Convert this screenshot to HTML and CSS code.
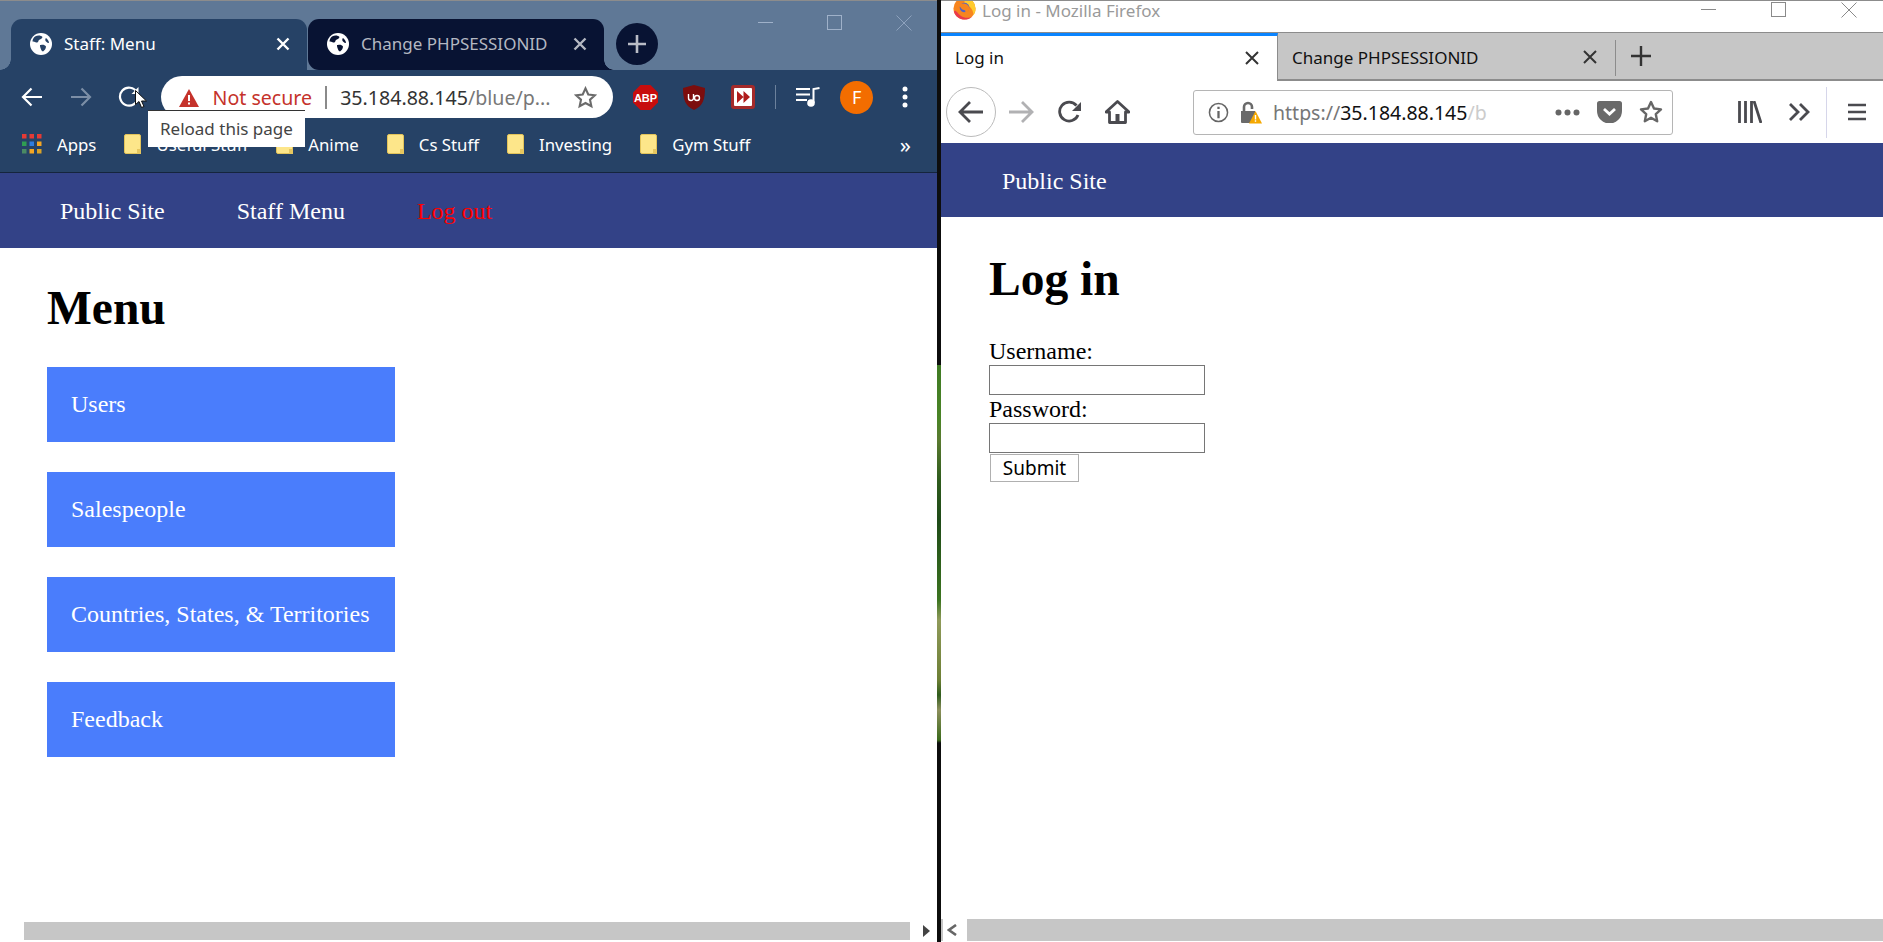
FILE: index.html
```html
<!DOCTYPE html>
<html lang="en">
<head>
  <meta charset="UTF-8">
  <title>Change PHPSESSIONID</title>
  <link rel="stylesheet" href="styles.css">
</head>
<body>
<div class="screen">

  <!-- Chrome window -->
  <section class="chrome">
    <div class="tabstrip">
      <div class="tab tab-on">
        <svg class="globe" viewBox="0 0 22 22"><circle cx="11" cy="11" r="11" fill="#fff"/><path d="M5 3.500c3-1.500 6-1 7.500.5-.5 2-2.500 2-3.500 3s-.5 2.500-2 2.500S4 8 2.500 8.500C2.500 6.500 3.500 4.500 5 3.500zM11 12c2-.5 4 0 5 1.500 0 2-1.500 4-3 5-1.500-.5-2-2-2.500-3.500s-.5-2-.5-3zM16 5c1.500 1 3 3 3 5-1 0-2-.5-3-1.500S15 6 16 5z" fill="#264266"/></svg>
        <span class="tab-title">Staff: Menu</span>
        <svg class="tab-x" viewBox="0 0 14 14"><path d="M1.500 1.500l11 11M12.500 1.500l-11 11" stroke="#fff" stroke-width="2.400"/></svg>
      </div>
      <div class="tab tab-off">
        <svg class="globe" viewBox="0 0 22 22"><circle cx="11" cy="11" r="11" fill="#fff"/><path d="M5 3.500c3-1.500 6-1 7.500.5-.5 2-2.500 2-3.500 3s-.5 2.500-2 2.500S4 8 2.500 8.500C2.500 6.500 3.500 4.500 5 3.500zM11 12c2-.5 4 0 5 1.500 0 2-1.500 4-3 5-1.500-.5-2-2-2.500-3.500s-.5-2-.5-3zM16 5c1.500 1 3 3 3 5-1 0-2-.5-3-1.500S15 6 16 5z" fill="#081333"/></svg>
        <span class="tab-title">Change PHPSESSIONID</span>
        <svg class="tab-x" viewBox="0 0 14 14"><path d="M1.500 1.500l11 11M12.500 1.500l-11 11" stroke="#b4b8c2" stroke-width="2.400"/></svg>
      </div>
      <div class="newtab">
        <svg viewBox="0 0 18 18" width="18" height="18"><path d="M9 0v18M0 9h18" stroke="#b9bcc6" stroke-width="2.600"/></svg>
      </div>
      <div class="winbtns">
        <svg viewBox="0 0 16 16" width="16" height="16"><path d="M0 7.500h15" stroke="#9fb1c9" stroke-width="1"/></svg>
        <svg viewBox="0 0 16 16" width="16" height="16"><rect x=".5" y=".5" width="14" height="14" fill="none" stroke="#9fb1c9"/></svg>
        <svg viewBox="0 0 16 16" width="16" height="16"><path d="M.5.500l15 15M15.500.500l-15 15" stroke="#8ea2bd" stroke-width="1"/></svg>
      </div>
    </div>

    <div class="toolbar">
      <div class="navrow">
        <span class="slot"><svg viewBox="0 0 22 20" width="22" height="20"><path d="M21 10H2M10.500 1.500L2 10l8.500 8.500" fill="none" stroke="#fff" stroke-width="2.200"/></svg></span>
        <span class="slot"><svg viewBox="0 0 22 20" width="22" height="20"><path d="M1 10h19M11.500 1.500L20 10l-8.500 8.500" fill="none" stroke="#7c8ea6" stroke-width="2.200"/></svg></span>
        <span class="slot"><svg viewBox="0 0 22 22" width="22" height="22"><path d="M19 6.500A9 9 0 1 0 20 11" fill="none" stroke="#fff" stroke-width="2.200"/><path d="M20.500 1v7h-7z" fill="#fff"/></svg></span>
        <div class="omnibox">
          <svg viewBox="0 0 20 18" width="20" height="18"><path d="M10 0l10 18H0z" fill="#c5322b"/><path d="M9 6h2v6H9zM9 13.500h2V15.500H9z" fill="#fff"/></svg>
          <span class="warn">Not secure</span>
          <span class="omni-sep"></span>
          <span class="url">35.184.88.145<span class="url-rest">/blue/p...</span></span>
          <svg class="omni-star" viewBox="0 0 24 24" width="23" height="23"><path d="M12 2.500l2.900 6.300 6.900.8-5.100 4.700 1.400 6.800-6.100-3.400-6.100 3.400 1.400-6.800-5.100-4.700 6.900-.8z" fill="none" stroke="#6b6b6b" stroke-width="2.200"/></svg>
        </div>
        <span class="slot ext-first">
          <svg viewBox="0 0 25 25" width="25" height="25"><path d="M7.500 0h10L25 7.500v10L17.500 25h-10L0 17.500v-10z" fill="#c70d0d"/><text x="12.500" y="17" class="abp">ABP</text></svg>
        </span>
        <span class="slot">
          <svg viewBox="0 0 22 25" width="22" height="25"><path d="M11 0l11 3c0 11-2 18-11 22C2 21 0 14 0 3z" fill="#7c0d0d"/><path d="M5.500 9v4a2.500 2.500 0 0 0 5 0V9M16.500 13a2.500 2.500 0 1 1-5 0 2.500 2.500 0 0 1 5 0z" fill="none" stroke="#fff" stroke-width="1.400"/></svg>
        </span>
        <span class="slot">
          <svg viewBox="0 0 24 24" width="24" height="24"><rect width="24" height="24" rx="3" fill="#a52a2a"/><rect x="3" y="3" width="18" height="18" rx="1" fill="#fff"/><path d="M6 6l6.500 6L6 18zM12.500 6l6.500 6-6.500 6z" fill="#b01c1c"/></svg>
        </span>
        <span class="tool-sep"></span>
        <span class="slot">
          <svg viewBox="0 0 24 20" width="24" height="20"><path d="M0 2h14M0 7.500h14M0 13h11" stroke="#fff" stroke-width="2"/><path d="M17.500 16V2l6-1" fill="none" stroke="#fff" stroke-width="2"/><circle cx="15" cy="16" r="3.800" fill="#fff"/></svg>
        </span>
        <span class="slot"><span class="avatar">F</span></span>
        <span class="slot">
          <svg viewBox="0 0 6 22" width="6" height="22"><circle cx="3" cy="3" r="2.500" fill="#fff"/><circle cx="3" cy="11" r="2.500" fill="#fff"/><circle cx="3" cy="19" r="2.500" fill="#fff"/></svg>
        </span>
      </div>

      <div class="bookmarks">
        <span class="bm">
          <svg viewBox="0 0 20 20" width="20" height="20"><g>
            <rect width="4.500" height="4.500" fill="#e53a35"/><rect x="7.500" width="4.500" height="4.500" fill="#e53a35"/><rect x="15" width="4.500" height="4.500" fill="#e53a35"/>
            <rect y="7.500" width="4.500" height="4.500" fill="#2f9e52"/><rect x="7.500" y="7.500" width="4.500" height="4.500" fill="#2f7de0"/><rect x="15" y="7.500" width="4.500" height="4.500" fill="#f5a623"/>
            <rect y="15" width="4.500" height="4.500" fill="#4a8a64"/><rect x="7.500" y="15" width="4.500" height="4.500" fill="#f5a623"/><rect x="15" y="15" width="4.500" height="4.500" fill="#d9a227"/>
          </g></svg>
          Apps
        </span>
        <span class="bm"><span class="folder"></span>Useful Stuff</span>
        <span class="bm"><span class="folder"></span>Anime</span>
        <span class="bm"><span class="folder"></span>Cs Stuff</span>
        <span class="bm"><span class="folder"></span>Investing</span>
        <span class="bm"><span class="folder"></span>Gym Stuff</span>
        <span class="bm-more">»</span>
      </div>
    </div>

    <nav class="sitenav">
      <a class="sitelink">Public Site</a>
      <a class="sitelink">Staff Menu</a>
      <a class="sitelink logout">Log out</a>
    </nav>

    <main class="page">
      <h1>Menu</h1>
      <a class="menu-btn">Users</a>
      <a class="menu-btn">Salespeople</a>
      <a class="menu-btn">Countries, States, &amp; Territories</a>
      <a class="menu-btn">Feedback</a>
    </main>

    <div class="hscroll">
      <span class="hscroll-bar"></span>
      <span class="hscroll-end"><svg viewBox="0 0 7 12" width="7" height="12"><path d="M0 0l7 6-7 6z" fill="#444"/></svg></span>
    </div>

    <div class="tooltip">Reload this page</div>
    <svg class="cursor" viewBox="0 0 12 18" width="12" height="18"><path d="M.5.500v14l3.500-3 2.500 6 2.500-1-2.500-5.500h5z" fill="#fff" stroke="#111" stroke-width="1"/></svg>
  </section>

  <div class="gap-strip"></div>

  <!-- Firefox window -->
  <section class="firefox">
    <div class="ff-title">
      <svg class="ff-logo" viewBox="0 0 24 24" width="23" height="23"><circle cx="12" cy="12" r="11.500" fill="#f7851f"/><path d="M12 .5a11.500 11.500 0 0 1 11.500 11.500c0 3-1 5-2 7-.5-7-5-11-9.500-11.500z" fill="#ffcb2e"/><path d="M1 15c1 5 6 8.500 11 8.500 3 0 6-1 8-3-3 1.500-8 2-12-1S3 13 1 15z" fill="#ea3a4c"/><circle cx="12" cy="11" r="5" fill="#4f63c9"/><path d="M6.500 8c3-2 9-2 10.500 3 .5 3-2 6-6 6 2-1 3-3 .5-3.500S7.500 11 6.500 8z" fill="#f7851f"/></svg>
      <span class="ff-title-text">Log in - Mozilla Firefox</span>
      <div class="ff-winbtns">
        <svg viewBox="0 0 16 16" width="16" height="16"><path d="M0 7.500h15" stroke="#8a8a8a"/></svg>
        <svg viewBox="0 0 16 16" width="16" height="16"><rect x=".5" y=".5" width="14" height="14" fill="none" stroke="#8a8a8a"/></svg>
        <svg viewBox="0 0 16 16" width="16" height="16"><path d="M.5.500l15 15M15.500.500l-15 15" stroke="#8a8a8a"/></svg>
      </div>
    </div>

    <div class="ff-tabs">
      <div class="ff-tab ff-tab-on">
        <span>Log in</span>
        <svg viewBox="0 0 14 14" width="14" height="14"><path d="M1 1l12 12M13 1L1 13" stroke="#333" stroke-width="2"/></svg>
      </div>
      <div class="ff-tab ff-tab-off">
        <span>Change PHPSESSIONID</span>
        <svg viewBox="0 0 14 14" width="14" height="14"><path d="M1 1l12 12M13 1L1 13" stroke="#333" stroke-width="2"/></svg>
      </div>
      <span class="ff-tab-sep"></span>
      <svg class="ff-plus" viewBox="0 0 20 20" width="20" height="20"><path d="M10 0v20M0 10h20" stroke="#333" stroke-width="2.400"/></svg>
    </div>

    <div class="ff-toolbar">
      <span class="ff-back"><svg viewBox="0 0 26 24" width="26" height="24"><path d="M25 12H3M12 2L2 12l10 10" fill="none" stroke="#4a4a4f" stroke-width="2.800"/></svg></span>
      <svg class="ff-fwd" viewBox="0 0 25 24" width="25" height="24"><path d="M0 12h22M13 2l10 10-10 10" fill="none" stroke="#b1b1b3" stroke-width="2.800"/></svg>
      <svg class="ff-reload" viewBox="0 0 24 24" width="24" height="24"><path d="M20 15a9.500 9.500 0 1 1-1.500-9.500" fill="none" stroke="#4a4a4f" stroke-width="2.800"/><path d="M23 2v9h-9z" fill="#4a4a4f"/></svg>
      <svg class="ff-home" viewBox="0 0 25 24" width="25" height="24"><path d="M12.500 1.500L1 12h3.500v10.500h16V12H24z" fill="none" stroke="#4a4a4f" stroke-width="2.800" stroke-linejoin="round"/><rect x="10.500" y="14" width="4" height="8" fill="#4a4a4f"/></svg>
      <div class="ff-urlbar">
        <svg viewBox="0 0 22 22" width="21" height="21"><circle cx="11" cy="11" r="9.500" fill="none" stroke="#666" stroke-width="1.600"/><path d="M9.800 9.500h2.400V17H9.800zM9.800 5h2.400v2.400H9.800z" fill="#666"/></svg>
        <svg class="ff-lock" viewBox="0 0 23 23" width="23" height="23"><path d="M2 10h14v11a1 1 0 0 1-1 1H3a1 1 0 0 1-1-1z" fill="#6a6a6a"/><path d="M5 10V6a4 4 0 0 1 8 0v2" fill="none" stroke="#6a6a6a" stroke-width="2.600"/><path d="M16.500 10L23 22.500H10z" fill="#f5a800"/><path d="M15.800 14h1.400v4.500h-1.400zM15.800 19.300h1.400v1.500h-1.400z" fill="#fff"/></svg>
        <span class="ff-url"><span class="ff-url-dim">https://</span>35.184.88.145<span class="ff-url-fade">/b</span></span>
        <svg class="ff-dots" viewBox="0 0 25 7" width="25" height="7"><circle cx="3.500" cy="3.500" r="3" fill="#666"/><circle cx="12.500" cy="3.500" r="3" fill="#666"/><circle cx="21.500" cy="3.500" r="3" fill="#666"/></svg>
        <svg class="ff-pocket" viewBox="0 0 25 22" width="25" height="22"><path d="M2.500 0h20A2.500 2.500 0 0 1 25 2.500V10A12.500 12.500 0 0 1 0 10V2.500A2.500 2.500 0 0 1 2.500 0z" fill="#6a6a6a"/><path d="M7 8l5.500 5L18 8" fill="none" stroke="#fff" stroke-width="2.800"/></svg>
        <svg class="ff-star" viewBox="0 0 24 24" width="24" height="24"><path d="M12 2l3 6.500 7 .9-5.200 4.800 1.400 7L12 17.700l-6.200 3.500 1.400-7L2 9.400l7-.9z" fill="none" stroke="#666" stroke-width="2.400" stroke-linejoin="round"/></svg>
      </div>
      <svg class="ff-lib" viewBox="0 0 24 22" width="24" height="22"><path d="M1.500 0v22M7.500 0v22M13.500 0v22M16 0l7 22" stroke="#4a4a4f" stroke-width="2.800"/></svg>
      <svg class="ff-more" viewBox="0 0 21 18" width="21" height="18"><path d="M1 1l8 8-8 8M11 1l8 8-8 8" fill="none" stroke="#4a4a4f" stroke-width="2.800"/></svg>
      <span class="ff-bar-sep"></span>
      <svg class="ff-menu" viewBox="0 0 18 18" width="18" height="18"><path d="M0 2h18M0 9h18M0 16h18" stroke="#4a4a4f" stroke-width="2.600"/></svg>
    </div>

    <nav class="sitenav ff-nav">
      <a class="sitelink">Public Site</a>
    </nav>

    <main class="page ff-page">
      <h1>Log in</h1>
      <form class="login" onsubmit="return false;">
        <label class="login-label" for="user">Username:</label>
        <input class="login-input" type="text" id="user">
        <label class="login-label" for="pass">Password:</label>
        <input class="login-input" type="password" id="pass">
        <button class="login-btn">Submit</button>
      </form>
    </main>

    <div class="ff-scroll">
      <span class="ff-scroll-end"><svg viewBox="0 0 10 12" width="10" height="12"><path d="M9 1L2 6l7 5" fill="none" stroke="#666" stroke-width="2.600"/></svg></span>
      <span class="ff-scroll-bar"></span>
    </div>
  </section>
</div>
</body>
</html>
```

FILE: styles.css
```css
html, body {
  margin: 0;
  padding: 0;
  background: #fff;
}

.screen {
  display: flex;
  width: 1883px;
  height: 942px;
  overflow: hidden;
  font-family: "Noto Sans", sans-serif;
}

/* ---- chrome window ---- */
.chrome {
  position: relative;
  display: flex;
  flex-direction: column;
  width: 937px;
  flex: none;
}

.tabstrip {
  display: flex;
  height: 51px;
  padding: 18px 0 0 11px;
  background: #5f7896;
  border-top: 1px solid #8c8c8c;
}

.tab {
  position: relative;
  display: flex;
  align-items: center;
  width: 296px;
  height: 51px;
  padding: 0 17px 2px 19px;
  box-sizing: border-box;
  border-radius: 11px 11px 0 0;
  font-size: 17px;
}

.tab-on {
  background: #264266;
  color: #fff;
}

.tab-on::before {
  content: "";
  position: absolute;
  left: -11px;
  bottom: 0;
  width: 11px;
  height: 11px;
  background: radial-gradient(circle at 0 0, #5f7896 10.5px, #264266 11px);
}

.tab-off {
  margin-left: 1px;
  background: #081333;
  color: #b4b8c2;
  border-radius: 11px 11px 0 11px;
}

.tab-off::after {
  content: "";
  position: absolute;
  right: -10px;
  bottom: 0;
  width: 10px;
  height: 10px;
  background: radial-gradient(circle at 100% 0, #5f7896 9.5px, #081333 10px);
}

.globe {
  width: 22px;
  height: 22px;
  flex: none;
}

.tab-title {
  margin-left: 12px;
  white-space: nowrap;
}

.tab-x {
  width: 14px;
  height: 14px;
  margin-left: auto;
}

.newtab {
  display: flex;
  align-items: center;
  justify-content: center;
  width: 42px;
  height: 42px;
  margin: 4px 0 0 12px;
  border-radius: 50%;
  background: #081333;
}

.winbtns {
  display: flex;
  gap: 53px;
  margin: -4px 0 0 100px;
}

.toolbar {
  height: 102px;
  background: #264266;
  border-bottom: 1px solid #15253d;
}

.navrow {
  display: flex;
  align-items: center;
  height: 42px;
  padding: 6px 0 0 8px;
}

.slot {
  display: flex;
  align-items: center;
  justify-content: center;
  width: 48.500px;
  height: 42px;
  flex: none;
}

.omnibox {
  display: flex;
  align-items: center;
  width: 452px;
  height: 42px;
  margin-left: 7px;
  padding: 1px 0 0 18px;
  box-sizing: border-box;
  border-radius: 21px;
  background: #fff;
  font-size: 19.600px;
}

.warn {
  margin-left: 14px;
  color: #c5322b;
  white-space: nowrap;
}

.omni-sep {
  width: 2px;
  height: 23px;
  margin: 0 13px;
  background: #8a8a8a;
}

.url {
  color: #333;
  white-space: nowrap;
}

.url-rest {
  color: #777;
}

.omni-star {
  margin-left: auto;
  margin-right: 16px;
}

.ext-first {
  margin-left: 9px;
}

.abp {
  font-family: "Liberation Sans", sans-serif;
  font-size: 11px;
  font-weight: bold;
  text-anchor: middle;
  fill: #fff;
}

.tool-sep {
  width: 1px;
  height: 24px;
  margin: 0 8px 0 8px;
  background: #6c819c;
}

.avatar {
  display: flex;
  align-items: center;
  justify-content: center;
  width: 33px;
  height: 33px;
  border-radius: 50%;
  background: #f36d00;
  color: #fff;
  font-size: 18px;
}

.bookmarks {
  display: flex;
  align-items: center;
  gap: 28px;
  height: 44px;
  margin-top: 4px;
  padding-left: 22px;
  color: #fff;
  font-size: 16.800px;
}

.bm {
  display: flex;
  align-items: center;
  gap: 15px;
  white-space: nowrap;
}

.folder {
  position: relative;
  width: 17px;
  height: 20px;
  box-sizing: border-box;
  border: 1px solid #e2c35a;
  border-radius: 2px;
  background: #fde68a;
}

.folder::after {
  content: "";
  position: absolute;
  right: -1px;
  bottom: -1px;
  width: 4px;
  height: 5px;
  background: #e6c65f;
}

.bm-more {
  margin-left: auto;
  margin-right: 26px;
  font-size: 22px;
  line-height: 1;
}

.sitenav {
  display: flex;
  height: 73px;
  padding: 2px 0 0 24px;
  align-items: center;
  background: #334287;
  font-family: "Liberation Serif", serif;
  font-size: 24px;
}

.sitelink {
  padding: 0 36px;
  color: #fff;
}

.logout {
  color: #f00;
}

.page {
  flex: 1;
  padding-left: 47px;
  font-family: "Liberation Serif", serif;
  color: #000;
}

.page h1 {
  margin: 32px 0 31px;
  font-size: 47.500px;
  line-height: 56px;
}

.menu-btn {
  display: flex;
  align-items: center;
  width: 348px;
  height: 75px;
  margin-bottom: 30px;
  padding-left: 24px;
  box-sizing: border-box;
  background: #4a7dfc;
  color: #fff;
  font-size: 24px;
  white-space: nowrap;
}

.hscroll {
  display: flex;
  height: 18px;
  margin-bottom: 2px;
  padding-left: 24px;
}

.hscroll-bar {
  width: 886px;
  background: #c6c6c6;
}

.hscroll-end {
  display: flex;
  align-items: center;
  margin-left: 13px;
}

.tooltip {
  position: absolute;
  left: 148px;
  top: 110px;
  width: 157px;
  height: 37px;
  box-sizing: border-box;
  padding-left: 12px;
  border-top: 1px solid #333;
  background: #fff;
  color: #444;
  font-size: 17px;
  line-height: 36px;
  white-space: nowrap;
}

.cursor {
  position: absolute;
  left: 135px;
  top: 90px;
}

.gap-strip {
  width: 4px;
  flex: none;
  background: linear-gradient(#0d0d0d 0, #0d0d0d 365px, #3f7a24 365px, #4a8426 420px, #5a7a30 440px, #2f5c1d 480px, #1f4a18 520px, #3c7420 600px, #8f9a5a 620px, #6d7f35 680px, #2f5c1d 695px, #8c8f5c 710px, #3c6a1c 740px, #0d0d0d 743px);
}

/* ---- firefox window ---- */
.firefox {
  display: flex;
  flex-direction: column;
  flex: 1;
  min-width: 0;
}

.ff-title {
  display: flex;
  align-items: flex-start;
  height: 31px;
  padding-left: 12px;
  border-top: 1px solid #8c8c8c;
  overflow: hidden;
}

.ff-logo {
  margin-top: -4px;
  flex: none;
}

.ff-title-text {
  margin-left: 6px;
  color: #9a9a9a;
  font-size: 17px;
  line-height: 20px;
}

.ff-winbtns {
  display: flex;
  gap: 54px;
  margin: 1px 26px 0 auto;
}

.ff-tabs {
  display: flex;
  align-items: stretch;
  height: 49px;
  box-sizing: border-box;
  background: #c6c6c6;
  border-top: 1px solid #8c8c8c;
  border-bottom: 2px solid #8c8c8c;
  font-size: 17px;
  color: #111;
}

.ff-tab {
  display: flex;
  align-items: center;
  box-sizing: border-box;
  white-space: nowrap;
}

.ff-tab svg {
  margin-left: auto;
}

.ff-tab-on {
  width: 337px;
  margin-bottom: -2px;
  padding: 0 18px 2px 14px;
  background: #fff;
  border-top: 3px solid #0a84ff;
  border-right: 1px solid #8c8c8c;
}

.ff-tab-off {
  width: 337px;
  padding: 2px 18px 0 14px;
}

.ff-tab-sep {
  width: 1px;
  height: 36px;
  margin: 7px 0 0 0;
  background: #8c8c8c;
}

.ff-plus {
  align-self: center;
  margin-left: 15px;
}

.ff-toolbar {
  display: flex;
  align-items: center;
  height: 62px;
  padding-left: 5px;
}

.ff-back {
  display: flex;
  align-items: center;
  justify-content: center;
  width: 50px;
  height: 50px;
  box-sizing: border-box;
  border: 1px solid #bbb;
  border-radius: 50%;
  flex: none;
}

.ff-fwd {
  margin-left: 13px;
}

.ff-reload {
  margin-left: 24px;
}

.ff-home {
  margin-left: 23px;
}

.ff-urlbar {
  display: flex;
  align-items: center;
  width: 480px;
  height: 45px;
  margin-left: 63px;
  padding-left: 14px;
  box-sizing: border-box;
  border: 1px solid #b5b5b5;
  border-radius: 3px;
  font-size: 19.500px;
  color: #111;
  white-space: nowrap;
}

.ff-lock {
  margin-left: 10px;
}

.ff-url {
  margin-left: 11px;
}

.ff-url-dim {
  color: #777;
}

.ff-url-fade {
  color: #ccc;
}

.ff-dots {
  margin-left: auto;
}

.ff-pocket {
  margin-left: 17px;
}

.ff-star {
  margin-left: 17px;
  margin-right: 9px;
}

.ff-lib {
  margin-left: 65px;
}

.ff-more {
  margin-left: 27px;
}

.ff-bar-sep {
  width: 1px;
  height: 51px;
  margin-left: 16px;
  background: #d6d6ea;
}

.ff-menu {
  margin-left: 21px;
}

.ff-nav {
  height: 71px;
  padding: 3px 0 0 25px;
}

.ff-page {
  padding-left: 48px;
}

.ff-page h1 {
  margin: 34px 0 30px;
}

.login {
  display: flex;
  flex-direction: column;
  align-items: flex-start;
}

.login-label {
  height: 28px;
  font-size: 24px;
  line-height: 28px;
}

.login-input {
  width: 216px;
  height: 30px;
  margin: 0;
  padding: 0;
  box-sizing: border-box;
  border: 1px solid #767676;
  border-radius: 0;
}

.login-btn {
  width: 89px;
  height: 28px;
  margin: 1px 0 0 1px;
  padding: 0;
  border: 1px solid #b0b0b0;
  border-radius: 0;
  background: #fff;
  color: #000;
  font-family: "Noto Sans", sans-serif;
  font-size: 19px;
}

.ff-scroll {
  display: flex;
  height: 22px;
  margin-bottom: 1px;
  padding-left: 2px;
  background: linear-gradient(#c6c6c6, #c6c6c6) left / 2px 100% no-repeat;
}

.ff-scroll-end {
  display: flex;
  align-items: center;
  width: 24px;
  padding-left: 4px;
  box-sizing: border-box;
}

.ff-scroll-bar {
  flex: 1;
  background: #c6c6c6;
}
```
